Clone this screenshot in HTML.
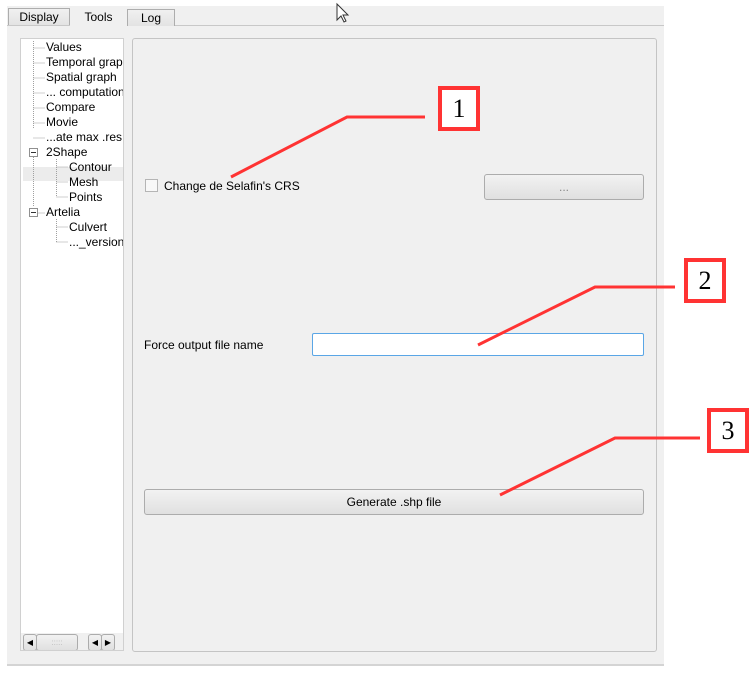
<!DOCTYPE html>
<html><head><style>
body{margin:0;width:756px;height:677px;background:#fff;position:relative;overflow:hidden;font-family:"Liberation Sans",sans-serif;font-size:12px;color:#000}
.a{position:absolute}
.tab{position:absolute;top:8px;height:17px;border:1px solid #adadad;border-bottom:none;background:linear-gradient(#f0f0f0,#e3e3e3);text-align:center;line-height:17px;font-size:12px;box-sizing:border-box}
.tree div{position:absolute;font-size:12px;white-space:nowrap;line-height:15px}
.btn{position:absolute;border:1px solid #acacac;border-radius:3px;background:linear-gradient(#f2f2f2,#e0e0e0);text-align:center;box-sizing:border-box}
.call{position:absolute;width:42px;height:45px;border:4px solid #ff3333;background:#fff;box-sizing:border-box;font-family:"Liberation Serif",serif;font-size:26px;text-align:center;line-height:38px}
</style></head><body>
<div class="a" style="left:7px;top:6px;width:657px;height:658px;background:#f0f0f0;border-bottom:2px solid #d4d4d4"></div>
<div class="a" style="left:7px;top:25px;width:657px;height:1px;background:#c8c8c8"></div>
<div class="tab" style="left:8px;width:62px">Display</div>
<div class="tab" style="left:70px;width:57px;top:6px;height:20px;background:#f0f0f0;border-color:#f0f0f0;line-height:20px">Tools</div>
<div class="tab" style="left:127px;width:48px;top:9px;line-height:17px">Log</div>
<div class="a" style="left:20px;top:38px;width:104px;height:613px;background:#fff;border:1px solid #d0d0d0;box-sizing:border-box;overflow:hidden">
<div class="a" style="left:2px;top:128px;width:100px;height:14px;background:#ececec"></div>
<svg class="a" style="left:0;top:0" width="104" height="220"><g stroke="#a0a0a0" stroke-dasharray="1,1" fill="none"><path d="M12.5 2V90M12.5 9H24M12.5 24H24M12.5 39H24M12.5 54H24M12.5 69H24M12.5 84H24M12.5 99H24M12.5 118V168M35.5 120V157M35.5 128H47M35.5 143H47M35.5 158H47M12.5 174H24M35.5 180V203M35.5 188H47M35.5 203H47"/></g>
<g fill="#fff" stroke="#909090"><rect x="8.5" y="109.5" width="8" height="8"/><rect x="8.5" y="169.5" width="8" height="8"/></g><path d="M10 113.5h5M10 173.5h5" stroke="#333"/></svg>
<div class="tree">
<div style="left:25px;top:1px">Values</div><div style="left:25px;top:16px">Temporal graph</div><div style="left:25px;top:31px">Spatial graph</div><div style="left:25px;top:46px">... computation</div><div style="left:25px;top:61px">Compare</div><div style="left:25px;top:76px">Movie</div><div style="left:25px;top:91px">...ate max .res</div><div style="left:25px;top:106px">2Shape</div><div style="left:48px;top:121px">Contour</div><div style="left:48px;top:136px">Mesh</div><div style="left:48px;top:151px">Points</div><div style="left:25px;top:166px">Artelia</div><div style="left:48px;top:181px">Culvert</div><div style="left:48px;top:196px">..._version</div>
</div>
<div class="a" style="left:0;top:594px;width:104px;height:19px;background:#f0f0f0"></div>
<div class="btn" style="left:2px;top:595px;width:14px;height:17px;font-size:8px;line-height:15px">◀</div>
<div class="btn" style="left:15px;top:595px;width:42px;height:17px;color:#bbb;font-size:8px;line-height:15px">:::::</div>
<div class="btn" style="left:67px;top:595px;width:14px;height:17px;font-size:8px;line-height:15px">◀</div>
<div class="btn" style="left:80px;top:595px;width:14px;height:17px;font-size:8px;line-height:15px">▶</div>
</div>
<div class="a" style="left:132px;top:38px;width:525px;height:614px;border:1px solid #c4c4c4;border-radius:3px;box-sizing:border-box"></div>
<div class="a" style="left:145px;top:179px;width:13px;height:13px;border:1px solid #b5b5b5;background:#f8f8f8;box-sizing:border-box"></div>
<div class="a" style="left:164px;top:179px">Change de Selafin's CRS</div>
<div class="btn" style="left:484px;top:174px;width:160px;height:26px;line-height:24px;color:#888">...</div>
<div class="a" style="left:144px;top:338px">Force output file name</div>
<div class="a" style="left:312px;top:333px;width:332px;height:23px;border:1px solid #5aa6e6;background:#fff;box-sizing:border-box;border-radius:2px"></div>
<div class="btn" style="left:144px;top:489px;width:500px;height:26px;line-height:25px">Generate .shp file</div>
<svg class="a" style="left:0;top:0" width="756" height="677"><g stroke="#ff3333" stroke-width="3" fill="none"><path d="M231 177L347 117H425M478 345L595 287H675M500 495L615 438H700"/></g>
<path d="M337 4v16l4-4 3 6 2-1-3-6h5z" fill="#fff" stroke="#333"/></svg>
<div class="call" style="left:438px;top:86px">1</div>
<div class="call" style="left:684px;top:258px">2</div>
<div class="call" style="left:707px;top:408px">3</div>
</body></html>
